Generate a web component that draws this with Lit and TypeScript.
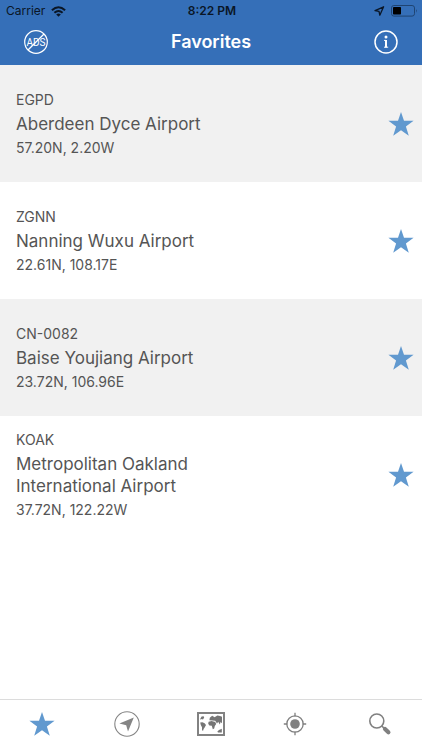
import { LitElement, html, css, svg } from "lit";
import { customElement, property } from "lit/decorators.js";

interface Airport {
  code: string;
  name: string;
  position: string;
}

const airports: Airport[] = [
  { code: "EGPD", name: "Aberdeen Dyce Airport", position: "57.20N, 2.20W" },
  { code: "ZGNN", name: "Nanning Wuxu Airport", position: "22.61N, 108.17E" },
  { code: "CN-0082", name: "Baise Youjiang Airport", position: "23.72N, 106.96E" },
  { code: "KOAK", name: "Metropolitan Oakland International Airport", position: "37.72N, 122.22W" },
];

const starPath = svg`<path fill="#6199cf" d="M13 1 L16 9.8 H25.6 L17.9 15.5 L20.8 24.8 L13 19.2 L5.2 24.8 L8.1 15.5 L0.4 9.8 H10 Z"/>`;
const star = html`<svg width="26" height="26" viewBox="0 0 26 26" aria-hidden="true">${starPath}</svg>`;

const compass = html`<svg width="28" height="28" viewBox="0 0 28 28" aria-hidden="true">
  <circle cx="14" cy="14" r="12.2" fill="none" stroke="#858585" stroke-width="1.1"/>
  <path fill="#858585" d="M20.8 7.6 L15 21.6 L13.2 15.2 L6.4 13.4 Z"/>
</svg>`;

const worldMap = html`<svg width="28" height="26" viewBox="0 0 28 26" aria-hidden="true">
  <rect x="1" y="2" width="26" height="22" fill="#fff" stroke="#828282" stroke-width="2"/>
  <g fill="#757575">
    <path d="M3.4 7.4 L4.6 5.4 L6.6 5.2 L7.2 6.6 L6 8.4 L4.6 8 L3.4 8.8 Z"/>
    <path d="M3.2 11.4 L5.4 11.2 L7.6 12.2 L9 14 L7.8 16.2 L6.6 18 L6 20 L5 19 L5 16.2 L3.8 14 Z"/>
    <path d="M11.6 10.8 L14.6 10 L18.2 11 L19.2 13 L17.8 15 L17.2 17.6 L15.8 18.2 L14.8 14.8 L12.4 14.4 L11.2 12.8 Z"/>
    <path d="M12.4 9.2 L12.8 6.8 L15.2 4.8 L17.6 6.2 L20.4 4.4 L23 5 L25 5.8 V12.2 L23.6 11 L22.8 13.6 L21.2 10.8 L20 12.4 L18.2 9.8 L15.4 9.4 Z"/>
    <path d="M20.4 20.4 L22 19 L24.8 17.8 V21.4 H21 Z"/>
  </g>
</svg>`;

const locate = html`<svg width="24" height="24" viewBox="0 0 24 24" aria-hidden="true">
  <g fill="none" stroke="#808080" stroke-width="1.3">
    <circle cx="12" cy="12" r="8.2"/>
    <path d="M12 0.8 V4.4 M12 19.6 V23.2 M0.8 12 H4.4 M19.6 12 H23.2"/>
  </g>
  <circle cx="12" cy="12" r="4.8" fill="#808080"/>
</svg>`;

const magnifier = html`<svg width="24" height="24" viewBox="0 0 24 24" aria-hidden="true">
  <circle cx="8.8" cy="9" r="7" fill="none" stroke="#808080" stroke-width="1.6"/>
  <path d="M13.6 13.8 L16.4 16.6" stroke="#808080" stroke-width="1.6"/>
  <path d="M17 17 L20.4 20.2" stroke="#808080" stroke-width="4.2" stroke-linecap="round"/>
</svg>`;

@customElement("status-bar")
export class StatusBar extends LitElement {
  static styles = css`
    :host {
      display: grid;
      grid-template-columns: 1fr auto 1fr;
      align-items: center;
      height: 22px;
      padding: 0 4px 0 6px;
      color: #0a1626;
      font-size: 12px;
      line-height: 16px;
    }
    .side {
      display: flex;
      align-items: center;
      gap: 6px;
    }
    .end {
      justify-content: flex-end;
    }
    .time {
      font-weight: 600;
    }
    svg {
      display: block;
    }
  `;

  render() {
    return html`
      <div class="side">
        <span>Carrier</span>
        <svg width="15" height="11" viewBox="0 0 15 11" aria-hidden="true">
          <g fill="none" stroke="#0a1626" stroke-width="2">
            <path d="M0.9 4.2 Q7.5 -1.8 14.1 4.2"/>
            <path d="M3.4 6.8 Q7.5 3.2 11.6 6.8"/>
          </g>
          <path fill="#0a1626" d="M5.2 8.4 Q7.5 6.6 9.8 8.4 L7.5 10.8 Z"/>
        </svg>
      </div>
      <span class="time">8:22 PM</span>
      <div class="side end">
        <svg width="11" height="10" viewBox="0 0 11 10" aria-hidden="true">
          <path fill="none" stroke="#0a1626" stroke-width="1.3" stroke-linejoin="round" d="M9.6 0.8 L5.8 9.2 L5 5.4 L1 4.6 Z"/>
        </svg>
        <svg width="27" height="12" viewBox="0 0 27 12" aria-hidden="true">
          <rect x="0.5" y="0.5" width="23" height="10.6" rx="2.4" fill="none" stroke="#1f4472"/>
          <rect x="2" y="2" width="8" height="7.6" rx="0.8" fill="#000"/>
          <path fill="#1f4472" d="M25 4 Q26.6 5.8 25 7.8 Z"/>
        </svg>
      </div>
    `;
  }
}

@customElement("airport-row")
export class AirportRow extends LitElement {
  @property({ attribute: false }) airport!: Airport;

  static styles = css`
    :host {
      display: flex;
      align-items: center;
      justify-content: space-between;
      gap: 112px;
      box-sizing: border-box;
      min-height: 117px;
      padding: 12px 8px 12px 16px;
      color: #555;
    }
    .details {
      display: flex;
      flex-direction: column;
      gap: 4px;
      font-size: 14px;
      line-height: 18px;
    }
    .name {
      margin: 0;
      font-size: 17px;
      font-weight: 400;
      line-height: 22px;
    }
    .star {
      flex: none;
      padding: 0;
      border: 0;
      background: none;
    }
    svg {
      display: block;
    }
  `;

  render() {
    const { code, name, position } = this.airport;
    return html`
      <div class="details">
        <span>${code}</span>
        <h2 class="name">${name}</h2>
        <span>${position}</span>
      </div>
      <button class="star" aria-label="Remove ${name} from favorites">${star}</button>
    `;
  }
}

@customElement("app-root")
export class AppRoot extends LitElement {
  static styles = css`
    :host {
      display: flex;
      flex-direction: column;
      min-height: 100vh;
      background: #fff;
      font-family: Inter, "Liberation Sans", sans-serif;
    }
    header {
      padding-bottom: 3px;
      background: #356fb8;
    }
    .nav {
      display: grid;
      grid-template-columns: 1fr auto 1fr;
      align-items: center;
      height: 40px;
      padding: 0 24px;
      color: #fff;
    }
    h1 {
      margin: 0;
      font-size: 18px;
      font-weight: 600;
      line-height: 22px;
    }
    button {
      padding: 0;
      border: 0;
      background: none;
    }
    .info {
      justify-self: end;
    }
    .ads {
      justify-self: start;
    }
    svg {
      display: block;
    }
    .ads-label {
      font-family: Roboto, sans-serif;
      font-size: 10px;
    }
    main {
      flex: 1;
    }
    ul {
      margin: 0;
      padding: 0;
      list-style: none;
    }
    li:nth-child(odd) {
      background: #f1f1f1;
    }
    .tabs {
      display: grid;
      grid-template-columns: repeat(5, 1fr);
      box-sizing: border-box;
      height: 51px;
      padding-bottom: 2px;
      border-top: 1px solid #dcdcdc;
      background: #fff;
    }
    .tab {
      display: flex;
      align-items: center;
      justify-content: center;
    }
  `;

  render() {
    return html`
      <header>
        <status-bar></status-bar>
        <div class="nav">
          <button class="ads" aria-label="Remove ads">
            <svg width="24" height="24" viewBox="0 0 24 24">
              <circle cx="12" cy="12" r="11.3" fill="none" stroke="#fff" stroke-width="1.2"/>
              <text class="ads-label" x="12" y="15.6" text-anchor="middle" fill="#fff">ADS</text>
              <path d="M4 20 L20 4" stroke="#fff" stroke-width="1.2"/>
            </svg>
          </button>
          <h1>Favorites</h1>
          <button class="info" aria-label="Information">
            <svg width="24" height="24" viewBox="0 0 24 24">
              <circle cx="12" cy="12" r="11" fill="none" stroke="#fff" stroke-width="1.5"/>
              <circle cx="12" cy="7" r="1.5" fill="#fff"/>
              <path d="M12 10 V17.4" stroke="#fff" stroke-width="2"/>
              <path d="M10 10.4 H12 M10 17.2 H14.2" stroke="#fff" stroke-width="1"/>
            </svg>
          </button>
        </div>
      </header>
      <main>
        <ul>
          ${airports.map((a) => html`<li><airport-row .airport=${a}></airport-row></li>`)}
        </ul>
      </main>
      <nav class="tabs">
        <button class="tab" aria-label="Favorites" aria-current="page">${star}</button>
        <button class="tab" aria-label="Nearby">${compass}</button>
        <button class="tab" aria-label="Map">${worldMap}</button>
        <button class="tab" aria-label="My location">${locate}</button>
        <button class="tab" aria-label="Search">${magnifier}</button>
      </nav>
    `;
  }
}
